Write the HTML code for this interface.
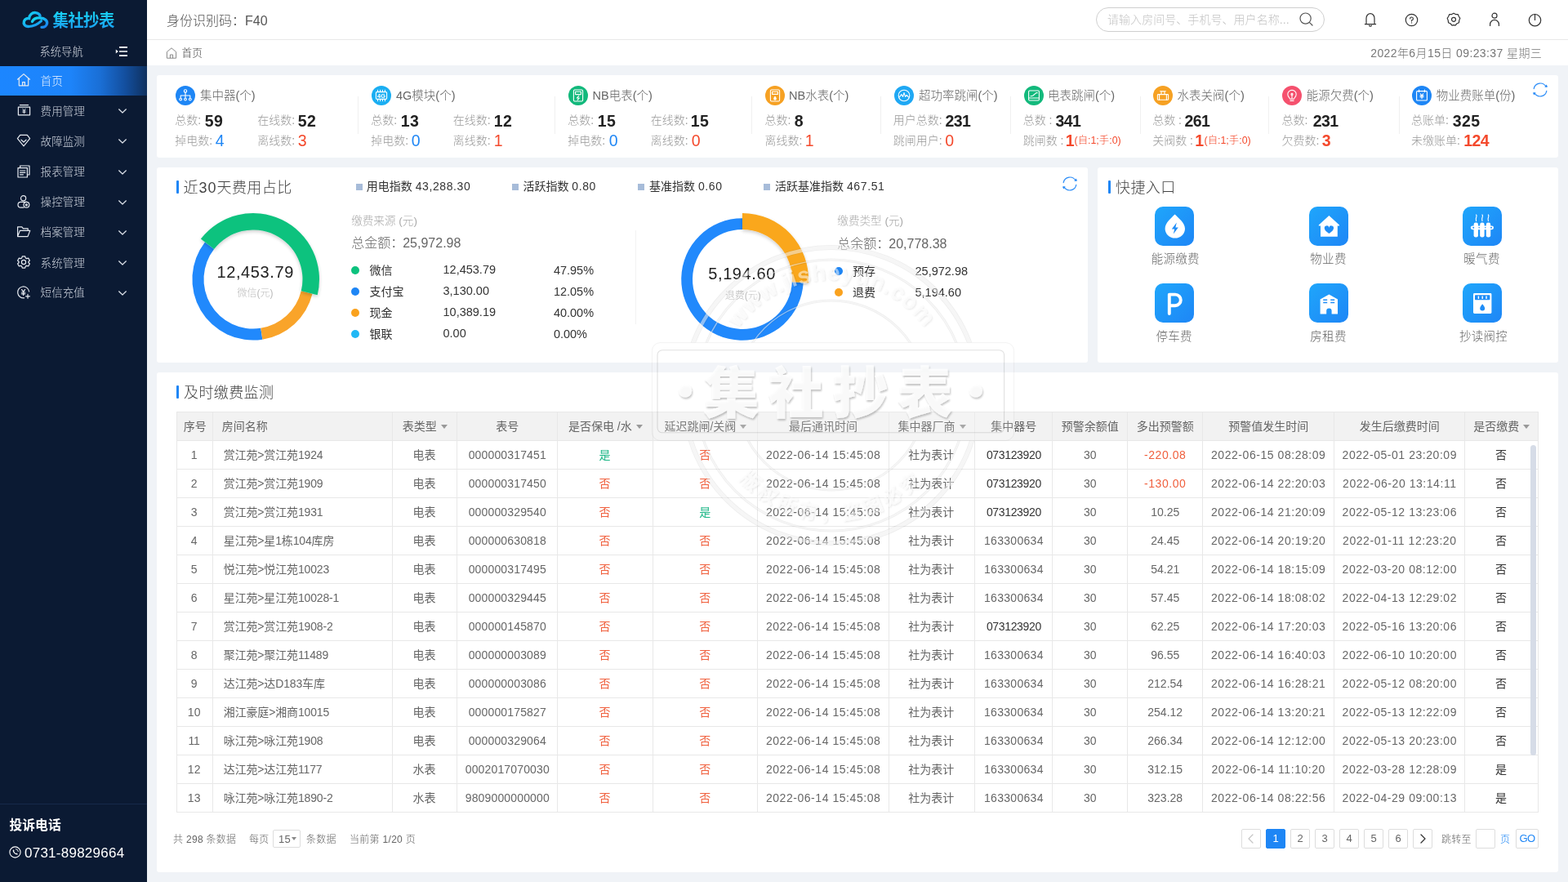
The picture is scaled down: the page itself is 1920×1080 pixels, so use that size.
<!DOCTYPE html>
<html lang="zh-CN"><head><meta charset="utf-8"><title>集社抄表</title>
<style>
*{box-sizing:border-box;margin:0;padding:0}
html,body{width:1920px;height:1080px;overflow:hidden}
body{font-family:"Liberation Sans","Noto Sans CJK SC",sans-serif;background:#f0f3f7;color:#333;position:relative;font-size:14px;font-weight:300}
body>*{will-change:transform}
.abs{position:absolute}
.t{position:absolute;white-space:nowrap;line-height:1}
#side{position:absolute;left:0;top:0;width:180px;height:1080px;background:#0b1a33}
#side .mi{position:absolute;left:0;width:180px;height:36px;color:#ccd2dc;font-size:13.6px}
#side .mi .lb{position:absolute;left:49.6px;top:.8px;line-height:36px;white-space:nowrap}
#side .mi svg.ic{position:absolute;left:20px;top:8.4px}
#side .mi svg.ch{position:absolute;left:143px;top:14px}
#side .mi.act{background:linear-gradient(90deg,#1c86ff 0%,#1d84fa 48%,#1a6fd6 68%,#134f9f 85%,#0f315f 100%);color:#e8f2ff}
#top{position:absolute;left:180px;top:0;width:1740px;height:49px;background:#fff;border-bottom:1px solid #e8e8e8}
#crumb{position:absolute;left:180px;top:49px;width:1740px;height:31px;background:#fff}
.card{position:absolute;background:#fff;border-radius:3px}
.ttl{position:absolute;font-size:18px;color:#444;white-space:nowrap;line-height:1;letter-spacing:.4px}
.bar{position:absolute;width:3px;height:16px;background:#1e86f5;border-radius:1px}
.st{position:absolute;top:0;height:101px}
.st .ico{position:absolute;left:0;top:13px;width:24px;height:24px;border-radius:12px}
.st .nm{position:absolute;left:30px;top:17px;font-size:15px;color:#666;white-space:nowrap;line-height:1}
.st .l{position:absolute;font-size:14px;color:#999;white-space:nowrap;line-height:1}
.st .n{position:absolute;font-size:19px;font-weight:bold;color:#222;white-space:nowrap;line-height:1}
.st .b{color:#1e86f5;font-weight:normal}
.st .r{color:#f4492c;font-weight:normal}
.st .rb{color:#f4492c}
.st .s{position:absolute;font-size:12px;color:#f4492c;white-space:nowrap;line-height:1}
.sep{position:absolute;width:1px;background:#f0f0f0}
table{border-collapse:collapse;table-layout:fixed;position:absolute;left:216px;top:504px;width:1668px;font-size:14px;color:#666;font-weight:300}
th,td{border:1px solid #e8e8e8;height:35px;text-align:center;font-weight:normal;white-space:nowrap;overflow:hidden;padding:0}
th{background:#f2f2f2;color:#666;height:35px}
td.l{text-align:left;padding-left:12.5px} th.l{text-align:left;padding-left:10.5px}
td.dt{letter-spacing:.55px} td.num{letter-spacing:.15px} td.dk.num{letter-spacing:-.35px} td.c8{letter-spacing:.3px} td.amt.red{letter-spacing:.55px} th,td.cj{padding-bottom:2px} td.l{padding-bottom:2px;letter-spacing:-.15px} td:first-child{padding-right:2px} td.cj{padding-right:1.5px}
td.red{color:#f0603e} td.grn{color:#1db787} td.dk{color:#333}
.tri{display:inline-block;width:0;height:0;border-left:4px solid transparent;border-right:4px solid transparent;border-top:5px solid #999;margin-left:5px;vertical-align:middle;position:relative;top:-1px}
.pg{position:absolute;top:1015px;width:24px;height:24px;border:1px solid #ddd;border-radius:2px;font-size:13px;line-height:22px;text-align:center;color:#666;background:#fff}
.pg.on{background:#1e86f5;border-color:#1e86f5;color:#fff}
.pt{position:absolute;font-size:12px;letter-spacing:.3px;margin-top:.6px;color:#666;white-space:nowrap;line-height:1}
.q{position:absolute;width:48px;height:48px;border-radius:10px;background:linear-gradient(135deg,#1fa6fb 0%,#1e86f6 100%)}
.ql{position:absolute;width:120px;text-align:center;font-size:14.5px;letter-spacing:.3px;color:#666;line-height:1;white-space:nowrap}
.lg{position:absolute;font-size:14px;font-weight:400;color:#333;white-space:nowrap;line-height:1}
.lgs{position:absolute;width:8px;height:8px;background:#a7bcd9}
.dot{position:absolute;width:10px;height:10px;border-radius:5px}
</style></head>
<body>
<div id="side">
<svg class="abs" style="left:26px;top:11px" width="36" height="28" viewBox="0 0 36 28">
<defs><linearGradient id="lg1" x1="0" y1="0" x2="1" y2="1"><stop offset="0" stop-color="#12e0f0"/><stop offset="1" stop-color="#1c7df0"/></linearGradient></defs>
<path d="M9 21.5 C4 21.5 2.5 18 3.5 15 C4.5 12 7.5 11.2 9.6 11.6 C10 7 13.5 4.2 17.6 4.6 C20.6 4.9 22.4 6.6 23 8.2" fill="none" stroke="url(#lg1)" stroke-width="3.4" stroke-linecap="round"/>
<path d="M13.5 15.4 C15 12.2 19 10.6 23.4 11 C28.6 11.4 32 14 31.6 17.6 C31.2 20.6 28.6 22.6 25 22.4" fill="none" stroke="url(#lg1)" stroke-width="3.4" stroke-linecap="round"/>
<path d="M9 21.5 C14 21.5 19 20 24.6 14.6" fill="none" stroke="url(#lg1)" stroke-width="3" stroke-linecap="round"/>
</svg>
<div class="t" style="left:64.5px;top:13.8px;font-size:19.5px;font-weight:bold;letter-spacing:-.7px;color:#1bb4f3;background:linear-gradient(180deg,#19d8f5,#1a9cf2);-webkit-background-clip:text;background-clip:text;-webkit-text-fill-color:transparent;line-height:22px;transform:scaleY(1.07);transform-origin:0 50%">集社抄表</div>
<div class="t" style="left:48.5px;top:57px;font-size:13.3px;color:#d3d8e0;line-height:14px">系统导航</div>
<svg class="abs" style="left:141px;top:56px" width="16" height="14" viewBox="0 0 16 14"><path d="M5 1.8 H15 M5 7 H15 M5 12.2 H15" stroke="#fff" stroke-width="1.7" fill="none"/><path d="M0.8 4.4 L3.8 7 L0.8 9.6 Z" fill="#fff"/></svg>
<div class="mi act" style="top:81px"><svg class="ic" width="18" height="18" viewBox="0 0 18 18"><path d="M1.5 8.2 L9 1.6 L16.5 8.2 M3.3 7 V15.8 H14.7 V7 M7.6 15.8 V11.6 H10.4 V15.8" fill="none" stroke="#e6eaf0" stroke-width="1.2" stroke-linejoin="round" stroke-linecap="round"/></svg><span class="lb">首页</span></div>
<div class="mi" style="top:118px"><svg class="ic" width="18" height="18" viewBox="0 0 18 18"><path d="M4.4 2.6 H14.6 M2.4 5.2 H16.6 V14.8 H2.4 Z" fill="none" stroke="#e6eaf0" stroke-width="1.2" stroke-linejoin="round" stroke-linecap="round"/><path d="M7.8 7.2 L9.5 9.4 L11.2 7.2 M9.5 9.4 V12.8 M7.8 9.8 H11.2 M7.8 11.3 H11.2" fill="none" stroke="#e6eaf0" stroke-width="0.9" stroke-linecap="round" stroke-linejoin="round"/></svg><span class="lb">费用管理</span><svg class="ch" width="12" height="8" style="left:143.5px;top:14px" viewBox="0 0 12 8"><path d="M1.6 1.8 L6 6 L10.4 1.8" fill="none" stroke="#dfe4ec" stroke-width="1.2" stroke-linecap="round" stroke-linejoin="round"/></svg></div>
<div class="mi" style="top:155px"><svg class="ic" width="18" height="18" viewBox="0 0 18 18"><path d="M4.6 2.4 H13.4 L16.6 6.6 L9 15.8 L1.4 6.6 Z M6 8.2 L9 11 L12 8.2" fill="none" stroke="#e6eaf0" stroke-width="1.2" stroke-linejoin="round" stroke-linecap="round"/></svg><span class="lb">故障监测</span><svg class="ch" width="12" height="8" style="left:143.5px;top:14px" viewBox="0 0 12 8"><path d="M1.6 1.8 L6 6 L10.4 1.8" fill="none" stroke="#dfe4ec" stroke-width="1.2" stroke-linecap="round" stroke-linejoin="round"/></svg></div>
<div class="mi" style="top:192.6px"><svg class="ic" width="18" height="18" viewBox="0 0 18 18"><path d="M4.6 4.6 V2 H16 V13 H13.4 M2 4.6 H13.4 V16 H2 Z M4.6 8 H10.8 M4.6 10.4 H10.8 M4.6 12.8 H8.4" fill="none" stroke="#e6eaf0" stroke-width="1.2" stroke-linejoin="round" stroke-linecap="round"/></svg><span class="lb">报表管理</span><svg class="ch" width="12" height="8" style="left:143.5px;top:14px" viewBox="0 0 12 8"><path d="M1.6 1.8 L6 6 L10.4 1.8" fill="none" stroke="#dfe4ec" stroke-width="1.2" stroke-linecap="round" stroke-linejoin="round"/></svg></div>
<div class="mi" style="top:229.7px"><svg class="ic" width="18" height="18" viewBox="0 0 18 18"><circle cx="8.6" cy="4.8" r="3.1" fill="none" stroke="#e6eaf0" stroke-width="1.2" stroke-linejoin="round" stroke-linecap="round"/><path d="M12.6 9.4 H5.4 A3.4 3.4 0 0 0 5.4 16.2 H9" fill="none" stroke="#e6eaf0" stroke-width="1.2" stroke-linejoin="round" stroke-linecap="round"/><circle cx="12.4" cy="12.8" r="3.4" fill="none" stroke="#e6eaf0" stroke-width="1.2" stroke-linejoin="round" stroke-linecap="round"/><circle cx="12.4" cy="12.8" r="1" fill="none" stroke="#e6eaf0" stroke-width="1.2" stroke-linejoin="round" stroke-linecap="round"/></svg><span class="lb">操控管理</span><svg class="ch" width="12" height="8" style="left:143.5px;top:14px" viewBox="0 0 12 8"><path d="M1.6 1.8 L6 6 L10.4 1.8" fill="none" stroke="#dfe4ec" stroke-width="1.2" stroke-linecap="round" stroke-linejoin="round"/></svg></div>
<div class="mi" style="top:266.6px"><svg class="ic" width="18" height="18" viewBox="0 0 18 18"><path d="M1.6 14.6 V2.8 H6.8 L8.4 4.8 H14.2 V7.4 M1.6 14.6 L4.4 7.4 H16.8 L14 14.6 Z" fill="none" stroke="#e6eaf0" stroke-width="1.2" stroke-linejoin="round" stroke-linecap="round"/></svg><span class="lb">档案管理</span><svg class="ch" width="12" height="8" style="left:143.5px;top:14px" viewBox="0 0 12 8"><path d="M1.6 1.8 L6 6 L10.4 1.8" fill="none" stroke="#dfe4ec" stroke-width="1.2" stroke-linecap="round" stroke-linejoin="round"/></svg></div>
<div class="mi" style="top:303.8px"><svg class="ic" width="18" height="18" viewBox="0 0 18 18"><path d="M7.3 1.8 H10.7 L11.3 3.9 L12.6 4.6 L14.7 4.1 L16.4 7 L14.9 8.5 V9.5 L16.4 11 L14.7 13.9 L12.6 13.4 L11.3 14.1 L10.7 16.2 H7.3 L6.7 14.1 L5.4 13.4 L3.3 13.9 L1.6 11 L3.1 9.5 V8.5 L1.6 7 L3.3 4.1 L5.4 4.6 L6.7 3.9 Z" fill="none" stroke="#e6eaf0" stroke-width="1.2" stroke-linejoin="round" stroke-linecap="round"/><circle cx="9" cy="9" r="2.6" fill="none" stroke="#e6eaf0" stroke-width="1.2" stroke-linejoin="round" stroke-linecap="round"/></svg><span class="lb">系统管理</span><svg class="ch" width="12" height="8" style="left:143.5px;top:14px" viewBox="0 0 12 8"><path d="M1.6 1.8 L6 6 L10.4 1.8" fill="none" stroke="#dfe4ec" stroke-width="1.2" stroke-linecap="round" stroke-linejoin="round"/></svg></div>
<div class="mi" style="top:340.6px"><svg class="ic" width="18" height="18" viewBox="0 0 18 18"><path d="M15.6 8 A7 7 0 1 0 9.6 15.9 M6.6 5.6 L8.6 8.2 L10.6 5.6 M8.6 8.2 V12.4 M6.4 9 H10.8 M6.4 10.8 H10.8 M14 11.4 V16.2 M11.6 13.8 H16.4" fill="none" stroke="#e6eaf0" stroke-width="1.2" stroke-linejoin="round" stroke-linecap="round"/></svg><span class="lb">短信充值</span><svg class="ch" width="12" height="8" style="left:143.5px;top:14px" viewBox="0 0 12 8"><path d="M1.6 1.8 L6 6 L10.4 1.8" fill="none" stroke="#dfe4ec" stroke-width="1.2" stroke-linecap="round" stroke-linejoin="round"/></svg></div>
<div class="abs" style="left:0;top:984px;width:180px;height:1px;background:#16294a"></div>
<div class="t" style="left:11.5px;top:1003px;font-size:15.8px;font-weight:bold;color:#fff;line-height:16px">投诉电话</div>
<svg class="abs" style="left:11px;top:1036px" width="15" height="15" viewBox="0 0 15 15"><circle cx="7.5" cy="7.5" r="6.6" fill="none" stroke="#fff" stroke-width="1.1"/><path d="M5 4.2 C4.4 5.6 5 7.4 6.4 8.8 C7.8 10.2 9.4 10.8 10.8 10.2 L9.8 8.6 L8.6 9 C7.8 8.6 6.6 7.4 6.2 6.4 L6.6 5.4 Z" fill="#fff"/><path d="M8 3.6 A3.6 3.6 0 0 1 11.4 7" fill="none" stroke="#fff" stroke-width="0.9"/></svg>
<div class="t" style="left:30px;top:1035.5px;font-size:17px;color:#fff;line-height:17px;letter-spacing:.25px">0731-89829664</div>
</div>
<div id="top">
<div class="t" style="left:24px;top:17.5px;font-size:16px;color:#555;line-height:16px">身份识别码：F40</div>
<div class="abs" style="left:1162px;top:9px;width:280px;height:30px;border:1px solid #cfcfcf;border-radius:15px;background:#fff"></div>
<div class="t" style="left:1176px;top:17px;font-size:14px;color:#c4c4c4;line-height:14px;letter-spacing:.05px">请输入房间号、手机号、用户名称...</div>
<svg class="abs" style="left:1410px;top:14px" width="20" height="20" viewBox="0 0 20 20"><circle cx="8.6" cy="8.6" r="6.6" fill="none" stroke="#555" stroke-width="1.2"/><path d="M13.6 13.6 L17 17" stroke="#555" stroke-width="1.2" fill="none" stroke-linecap="round"/></svg>
<svg class="abs" style="left:1489px;top:14px" width="18" height="20" viewBox="0 0 18 20"><path d="M2.4 15.6 H15.6 M4 15.6 V8.2 A5 5.6 0 0 1 14 8.2 V15.6 M7.6 17.2 A1.5 1.5 0 0 0 10.4 17.2" fill="none" stroke="#333" stroke-width="1.2" stroke-linecap="round" stroke-linejoin="round"/></svg>
<svg class="abs" style="left:1539px;top:15px" width="19" height="19" viewBox="0 0 19 19"><circle cx="9.5" cy="9.5" r="7.2" fill="none" stroke="#333" stroke-width="1.2" stroke-linecap="round" stroke-linejoin="round"/><path d="M7.6 7.8 A1.9 1.9 0 1 1 9.5 9.8 V11" fill="none" stroke="#333" stroke-width="1.2" stroke-linecap="round" stroke-linejoin="round" stroke-width="1.1"/><circle cx="9.5" cy="12.9" r="0.7" fill="#333"/></svg>
<svg class="abs" style="left:1590px;top:14px" width="20" height="20" viewBox="0 0 20 20"><path d="M10 2.2 L12.4 3.6 L15.2 3.6 L16.4 6.2 L17.8 8.4 L16.8 10.9 L16.4 13.8 L13.8 15 L12 17.2 L10 16.6 L8 17.2 L6.2 15 L3.6 13.8 L3.2 10.9 L2.2 8.4 L3.6 6.2 L4.8 3.6 L7.6 3.6 Z" fill="none" stroke="#333" stroke-width="1.2" stroke-linecap="round" stroke-linejoin="round"/><circle cx="10" cy="9.8" r="2.5" fill="none" stroke="#333" stroke-width="1.2" stroke-linecap="round" stroke-linejoin="round"/></svg>
<svg class="abs" style="left:1641px;top:14px" width="18" height="20" viewBox="0 0 18 20"><circle cx="9" cy="5.2" r="3" fill="none" stroke="#333" stroke-width="1.2" stroke-linecap="round" stroke-linejoin="round"/><path d="M3.6 17.4 V16 A5.4 5.6 0 0 1 14.4 16 V17.4" fill="none" stroke="#333" stroke-width="1.2" stroke-linecap="round" stroke-linejoin="round"/></svg>
<svg class="abs" style="left:1690px;top:15px" width="19" height="19" viewBox="0 0 19 19"><circle cx="9.5" cy="9.7" r="7.2" fill="none" stroke="#333" stroke-width="1.2" stroke-linecap="round" stroke-linejoin="round"/><path d="M9.5 2.4 V9.4" fill="none" stroke="#333" stroke-width="1.2" stroke-linecap="round" stroke-linejoin="round"/></svg>
</div>
<div id="crumb">
<svg class="abs" style="left:22px;top:8px" width="16" height="16" viewBox="0 0 16 16"><path d="M2.4 6.6 L8 1.8 L13.6 6.6 V14.2 H2.4 Z M6.4 14.2 V10 H9.6 V14.2" fill="none" stroke="#888" stroke-width="1" stroke-linejoin="round"/></svg>
<div class="t" style="left:42.6px;top:10.4px;font-size:12.6px;color:#444;line-height:13px">首页</div>
<div class="t" style="right:31.8px;top:9px;font-size:14px;color:#777;line-height:14px;letter-spacing:.4px">2022年6月15日 09:23:37 星期三</div>
</div>
<div class="card" id="stats" style="left:192px;top:92px;width:1716px;height:101px">
<svg class="abs" style="left:23px;top:13px" width="24" height="24" viewBox="0 0 24 24"><circle cx="12" cy="12" r="12" fill="#1e86f5"/><circle cx="12" cy="6.4" r="1.7" fill="none" stroke="#fff" stroke-width="1.1" stroke-linecap="round" stroke-linejoin="round"/><path d="M12 8.2 V12 M6.2 15 V12 H17.8 V15 M12 12 V15" fill="none" stroke="#fff" stroke-width="1.1" stroke-linecap="round" stroke-linejoin="round"/><circle cx="6.2" cy="16.6" r="1.4" fill="none" stroke="#fff" stroke-width="1.1" stroke-linecap="round" stroke-linejoin="round"/><circle cx="12" cy="16.6" r="1.4" fill="none" stroke="#fff" stroke-width="1.1" stroke-linecap="round" stroke-linejoin="round"/><circle cx="17.8" cy="16.6" r="1.4" fill="none" stroke="#fff" stroke-width="1.1" stroke-linecap="round" stroke-linejoin="round"/></svg>
<div class="t" style="left:53px;top:16.5px;font-size:14.5px;color:#666;line-height:16px">集中器(个)</div>
<div class="t" style="left:22.2px;top:47.4px;font-size:14px;color:#999;line-height:16px">总数:</div>
<div class="t" style="left:59.0px;top:45.8px;font-size:19.5px;font-weight:bold;color:#222;line-height:20px;letter-spacing:.4px;margin-left:-.3px;">59</div>
<div class="t" style="left:123.2px;top:47.4px;font-size:14px;color:#999;line-height:16px">在线数:</div>
<div class="t" style="left:173.0px;top:45.8px;font-size:19.5px;font-weight:bold;color:#222;line-height:20px;letter-spacing:.4px;margin-left:-.3px;">52</div>
<div class="t" style="left:22.2px;top:71.8px;font-size:14px;color:#999;line-height:16px">掉电数:</div>
<div class="t" style="left:72.0px;top:69.7px;font-size:19.5px;font-weight:normal;color:#1e86f5;line-height:20px;letter-spacing:.4px;margin-left:-.3px;">4</div>
<div class="t" style="left:123.2px;top:71.8px;font-size:14px;color:#999;line-height:16px">离线数:</div>
<div class="t" style="left:173.0px;top:69.7px;font-size:19.5px;font-weight:normal;color:#f4492c;line-height:20px;letter-spacing:.4px;margin-left:-.3px;">3</div>
<svg class="abs" style="left:262.5px;top:13px" width="24" height="24" viewBox="0 0 24 24"><circle cx="12" cy="12" r="12" fill="#1aaef2"/><rect x="5.4" y="7.6" width="13.2" height="8.8" rx="1.2" fill="none" stroke="#fff" stroke-width="1.1" stroke-linecap="round" stroke-linejoin="round"/><path d="M7.6 5.4 V7.4 M10.6 5.4 V7.4 M13.4 5.4 V7.4 M16.4 5.4 V7.4 M7.6 16.6 V18.6 M10.6 16.6 V18.6 M13.4 16.6 V18.6 M16.4 16.6 V18.6" fill="none" stroke="#fff" stroke-width="1.1" stroke-linecap="round" stroke-linejoin="round"/><text x="12" y="14.7" font-size="7.4" font-weight="bold" fill="#fff" text-anchor="middle" font-family="Liberation Sans,sans-serif">4G</text></svg>
<div class="t" style="left:293px;top:16.5px;font-size:14.5px;color:#666;line-height:16px">4G模块(个)</div>
<div class="t" style="left:262.2px;top:47.4px;font-size:14px;color:#999;line-height:16px">总数:</div>
<div class="t" style="left:299.0px;top:45.8px;font-size:19.5px;font-weight:bold;color:#222;line-height:20px;letter-spacing:.4px;margin-left:-.3px;">13</div>
<div class="t" style="left:362.8px;top:47.4px;font-size:14px;color:#999;line-height:16px">在线数:</div>
<div class="t" style="left:413.0px;top:45.8px;font-size:19.5px;font-weight:bold;color:#222;line-height:20px;letter-spacing:.4px;margin-left:-.3px;">12</div>
<div class="t" style="left:262.2px;top:71.8px;font-size:14px;color:#999;line-height:16px">掉电数:</div>
<div class="t" style="left:312.0px;top:69.7px;font-size:19.5px;font-weight:normal;color:#1e86f5;line-height:20px;letter-spacing:.4px;margin-left:-.3px;">0</div>
<div class="t" style="left:362.8px;top:71.8px;font-size:14px;color:#999;line-height:16px">离线数:</div>
<div class="t" style="left:413.0px;top:69.7px;font-size:19.5px;font-weight:normal;color:#f4492c;line-height:20px;letter-spacing:.4px;margin-left:-.3px;">1</div>
<svg class="abs" style="left:503.5px;top:13px" width="24" height="24" viewBox="0 0 24 24"><circle cx="12" cy="12" r="12" fill="#13b97c"/><rect x="6.4" y="5" width="11.2" height="14" rx="1.4" fill="none" stroke="#fff" stroke-width="1.1" stroke-linecap="round" stroke-linejoin="round"/><rect x="8.6" y="7.2" width="6.8" height="3.4" fill="none" stroke="#fff" stroke-width="1.1" stroke-linecap="round" stroke-linejoin="round"/><path d="M12.8 12.4 L10.4 15 H13.4 L11.2 17.4" fill="none" stroke="#fff" stroke-width="1.1" stroke-linecap="round" stroke-linejoin="round"/></svg>
<div class="t" style="left:533.5px;top:16.5px;font-size:14.5px;color:#666;line-height:16px">NB电表(个)</div>
<div class="t" style="left:503.2px;top:47.4px;font-size:14px;color:#999;line-height:16px">总数:</div>
<div class="t" style="left:540.0px;top:45.8px;font-size:19.5px;font-weight:bold;color:#222;line-height:20px;letter-spacing:.4px;margin-left:-.3px;">15</div>
<div class="t" style="left:604.7px;top:47.4px;font-size:14px;color:#999;line-height:16px">在线数:</div>
<div class="t" style="left:654.0px;top:45.8px;font-size:19.5px;font-weight:bold;color:#222;line-height:20px;letter-spacing:.4px;margin-left:-.3px;">15</div>
<div class="t" style="left:503.2px;top:71.8px;font-size:14px;color:#999;line-height:16px">掉电数:</div>
<div class="t" style="left:554.0px;top:69.7px;font-size:19.5px;font-weight:normal;color:#1e86f5;line-height:20px;letter-spacing:.4px;margin-left:-.3px;">0</div>
<div class="t" style="left:604.7px;top:71.8px;font-size:14px;color:#999;line-height:16px">离线数:</div>
<div class="t" style="left:655.0px;top:69.7px;font-size:19.5px;font-weight:normal;color:#f4492c;line-height:20px;letter-spacing:.4px;margin-left:-.3px;">0</div>
<svg class="abs" style="left:744.5px;top:13px" width="24" height="24" viewBox="0 0 24 24"><circle cx="12" cy="12" r="12" fill="#f6a123"/><rect x="6.4" y="5" width="11.2" height="14" rx="1.4" fill="none" stroke="#fff" stroke-width="1.1" stroke-linecap="round" stroke-linejoin="round"/><rect x="8.6" y="7.2" width="6.8" height="3.2" fill="none" stroke="#fff" stroke-width="1.1" stroke-linecap="round" stroke-linejoin="round"/><path d="M12 12.6 C13.4 14.4 13.8 15.2 13.8 15.9 A1.8 1.8 0 0 1 10.2 15.9 C10.2 15.2 10.6 14.4 12 12.6 Z" fill="#fff"/></svg>
<div class="t" style="left:774px;top:16.5px;font-size:14.5px;color:#666;line-height:16px">NB水表(个)</div>
<div class="t" style="left:744.5px;top:47.4px;font-size:14px;color:#999;line-height:16px">总数:</div>
<div class="t" style="left:781.0px;top:45.8px;font-size:19.5px;font-weight:bold;color:#222;line-height:20px;letter-spacing:.4px;margin-left:-.3px;">8</div>
<div class="t" style="left:744.5px;top:71.8px;font-size:14px;color:#999;line-height:16px">离线数:</div>
<div class="t" style="left:794.0px;top:69.7px;font-size:19.5px;font-weight:normal;color:#f4492c;line-height:20px;letter-spacing:.4px;margin-left:-.3px;">1</div>
<svg class="abs" style="left:903px;top:13px" width="24" height="24" viewBox="0 0 24 24"><circle cx="12" cy="12" r="12" fill="#1fa8f4"/><circle cx="12" cy="12" r="6.8" fill="none" stroke="#fff" stroke-width="1.1" stroke-linecap="round" stroke-linejoin="round"/><path d="M6.6 13.6 L8.8 10.6 L10.6 13.4 L12 8.6 L13.6 13.4 L15.2 11.4 L17.4 13.8" fill="none" stroke="#fff" stroke-width="1.1" stroke-linecap="round" stroke-linejoin="round"/></svg>
<div class="t" style="left:933px;top:16.5px;font-size:14.5px;color:#666;line-height:16px">超功率跳闸(个)</div>
<div class="t" style="left:901.7px;top:47.4px;font-size:14px;color:#999;line-height:16px">用户总数:</div>
<div class="t" style="left:965.5px;top:45.8px;font-size:19.5px;font-weight:bold;color:#222;line-height:20px;letter-spacing:-.6px;">231</div>
<div class="t" style="left:901.7px;top:71.8px;font-size:14px;color:#999;line-height:16px">跳闸用户:</div>
<div class="t" style="left:965.5px;top:69.7px;font-size:19.5px;font-weight:normal;color:#f4492c;line-height:20px;letter-spacing:.4px;margin-left:-.3px;">0</div>
<svg class="abs" style="left:1061.6px;top:13px" width="24" height="24" viewBox="0 0 24 24"><circle cx="12" cy="12" r="12" fill="#13b97c"/><rect x="5.6" y="6" width="12.8" height="12" rx="1.2" fill="none" stroke="#fff" stroke-width="1.1" stroke-linecap="round" stroke-linejoin="round"/><path d="M5.8 15 H18.2 M8 12.8 L10.6 12.2 L15 8.6 L16.4 8.8" fill="none" stroke="#fff" stroke-width="1.1" stroke-linecap="round" stroke-linejoin="round"/></svg>
<div class="t" style="left:1091px;top:16.5px;font-size:14.5px;color:#666;line-height:16px">电表跳闸(个)</div>
<div class="t" style="left:1060.7px;top:47.4px;font-size:14px;color:#999;line-height:16px">总数 :</div>
<div class="t" style="left:1100.5px;top:45.8px;font-size:19.5px;font-weight:bold;color:#222;line-height:20px;letter-spacing:-.6px;">341</div>
<div class="t" style="left:1060.7px;top:71.8px;font-size:14px;color:#999;line-height:16px">跳闸数 :</div>
<div class="t" style="left:1113.0px;top:69.7px;font-size:19.5px;font-weight:bold;color:#f4492c;line-height:20px;letter-spacing:.4px;margin-left:-.3px;">1</div>
<div class="t" style="left:1123.5px;top:74.3px;font-size:12.4px;color:#f4492c;line-height:13px">(自:1;手:0)</div>
<svg class="abs" style="left:1219.7px;top:13px" width="24" height="24" viewBox="0 0 24 24"><circle cx="12" cy="12" r="12" fill="#f6a123"/><rect x="5.4" y="10.6" width="13.2" height="6.6" rx="0.8" fill="none" stroke="#fff" stroke-width="1.1" stroke-linecap="round" stroke-linejoin="round"/><path d="M7.6 10.6 V17.2 M16.4 10.6 V17.2 M10 10.4 V7 H14 V10.4 M8.6 6.8 H15.4" fill="none" stroke="#fff" stroke-width="1.1" stroke-linecap="round" stroke-linejoin="round"/></svg>
<div class="t" style="left:1249.6px;top:16.5px;font-size:14.5px;color:#666;line-height:16px">水表关阀(个)</div>
<div class="t" style="left:1219.2px;top:47.4px;font-size:14px;color:#999;line-height:16px">总数 :</div>
<div class="t" style="left:1258.6px;top:45.8px;font-size:19.5px;font-weight:bold;color:#222;line-height:20px;letter-spacing:-.6px;">261</div>
<div class="t" style="left:1219.2px;top:71.8px;font-size:14px;color:#999;line-height:16px">关阀数 :</div>
<div class="t" style="left:1271.5px;top:69.7px;font-size:19.5px;font-weight:bold;color:#f4492c;line-height:20px;letter-spacing:.4px;margin-left:-.3px;">1</div>
<div class="t" style="left:1282.5px;top:74.3px;font-size:12.4px;color:#f4492c;line-height:13px">(自:1;手:0)</div>
<svg class="abs" style="left:1377.8px;top:13px" width="24" height="24" viewBox="0 0 24 24"><circle cx="12" cy="12" r="12" fill="#f5516e"/><path d="M9.6 16.2 C9.6 14.8 6.8 13.8 6.8 10.6 A5.2 5.2 0 0 1 17.2 10.6 C17.2 13.8 14.4 14.8 14.4 16.2 Z M10 18.4 H14 M12 16 V11.4" fill="none" stroke="#fff" stroke-width="1.1" stroke-linecap="round" stroke-linejoin="round"/><circle cx="12" cy="10.4" r="1" fill="none" stroke="#fff" stroke-width="1.1" stroke-linecap="round" stroke-linejoin="round"/></svg>
<div class="t" style="left:1407.7px;top:16.5px;font-size:14.5px;color:#666;line-height:16px">能源欠费(个)</div>
<div class="t" style="left:1377.4px;top:47.4px;font-size:14px;color:#999;line-height:16px">总数:</div>
<div class="t" style="left:1415.8px;top:45.8px;font-size:19.5px;font-weight:bold;color:#222;line-height:20px;letter-spacing:-.6px;">231</div>
<div class="t" style="left:1377.4px;top:71.8px;font-size:14px;color:#999;line-height:16px">欠费数:</div>
<div class="t" style="left:1427.0px;top:69.7px;font-size:19.5px;font-weight:bold;color:#f4492c;line-height:20px;letter-spacing:.4px;margin-left:-.3px;">3</div>
<svg class="abs" style="left:1536.8px;top:13px" width="24" height="24" viewBox="0 0 24 24"><circle cx="12" cy="12" r="12" fill="#1e86f5"/><rect x="5.6" y="6.6" width="12.8" height="11.4" rx="1" fill="none" stroke="#fff" stroke-width="1.1" stroke-linecap="round" stroke-linejoin="round"/><path d="M8.6 5 V7.6 M15.4 5 V7.6 M10.2 9.8 L12 11.8 L13.8 9.8 M12 11.8 V15.6 M10 12.4 H14 M10 14 H14" fill="none" stroke="#fff" stroke-width="1.1" stroke-linecap="round" stroke-linejoin="round"/></svg>
<div class="t" style="left:1566.7px;top:16.5px;font-size:14.5px;color:#666;line-height:16px">物业费账单(份)</div>
<div class="t" style="left:1535.9px;top:47.4px;font-size:14px;color:#999;line-height:16px">总账单:</div>
<div class="t" style="left:1587.0px;top:45.8px;font-size:19.5px;font-weight:bold;color:#222;line-height:20px;letter-spacing:.4px;margin-left:-.3px;">325</div>
<div class="t" style="left:1535.9px;top:71.8px;font-size:14px;color:#999;line-height:16px">未缴账单:</div>
<div class="t" style="left:1600.3px;top:69.7px;font-size:19.5px;font-weight:bold;color:#f4492c;line-height:20px;letter-spacing:-.6px;">124</div>
<div class="sep" style="left:245.8px;top:26px;height:46px"></div>
<div class="sep" style="left:486.8px;top:26px;height:46px"></div>
<div class="sep" style="left:727.7px;top:26px;height:46px"></div>
<div class="sep" style="left:886.3px;top:26px;height:46px"></div>
<div class="sep" style="left:1045.3px;top:26px;height:46px"></div>
<div class="sep" style="left:1203.5px;top:26px;height:46px"></div>
<div class="sep" style="left:1361.1px;top:26px;height:46px"></div>
<div class="sep" style="left:1520.5px;top:26px;height:46px"></div>
<svg class="abs" style="left:1683.4px;top:7px" width="22" height="22" viewBox="0 0 22 22"><path d="M3.2 9.6 A8 8 0 0 1 18.2 7.4 M18.8 12.4 A8 8 0 0 1 3.8 14.6" fill="none" stroke="#2b8cf7" stroke-width="1.2" stroke-linecap="round"/><path d="M16.2 7.4 H20.2 L18.6 4.4 Z M5.8 14.6 H1.8 L3.4 17.6 Z" fill="#2b8cf7"/></svg>
</div>
<div class="card" id="chart" style="left:192px;top:205px;width:1140px;height:239px">
<div class="bar" style="left:24px;top:16px"></div>
<div class="ttl" style="left:32.599999999999994px;top:14.800000000000011px;line-height:20px">近<span style="letter-spacing:1px;margin-left:.5px">30</span>天费用占比</div>
<div class="lgs" style="left:243.6px;top:20px"></div>
<div class="lg" style="left:256.8px;top:14.400000000000006px;line-height:18px;font-size:14px">用电指数 <span style="letter-spacing:.6px">43,288.30</span></div>
<div class="lgs" style="left:434.9px;top:20px"></div>
<div class="lg" style="left:448.4px;top:14.400000000000006px;line-height:18px;font-size:14px">活跃指数 <span style="letter-spacing:.6px">0.80</span></div>
<div class="lgs" style="left:589.2px;top:20px"></div>
<div class="lg" style="left:603.0px;top:14.400000000000006px;line-height:18px;font-size:14px">基准指数 <span style="letter-spacing:.6px">0.60</span></div>
<div class="lgs" style="left:743.3px;top:20px"></div>
<div class="lg" style="left:757.1px;top:14.400000000000006px;line-height:18px;font-size:14px">活跃基准指数 <span style="letter-spacing:.6px">467.51</span></div>
<svg class="abs" style="left:1106.6px;top:9px" width="22" height="22" viewBox="0 0 22 22"><path d="M3.2 9.6 A8 8 0 0 1 18.2 7.4 M18.8 12.4 A8 8 0 0 1 3.8 14.6" fill="none" stroke="#2b8cf7" stroke-width="1.2" stroke-linecap="round"/><path d="M16.2 7.4 H20.2 L18.6 4.4 Z M5.8 14.6 H1.8 L3.4 17.6 Z" fill="#2b8cf7"/></svg>
<svg class="abs" style="left:0;top:0" width="1140" height="239" viewBox="192 205 1140 239"><defs><filter id="ds" x="-20%" y="-20%" width="140%" height="140%"><feGaussianBlur in="SourceAlpha" stdDeviation="2.2"/><feOffset dx="0" dy="2"/><feComponentTransfer><feFuncA type="linear" slope="0.2"/></feComponentTransfer><feMerge><feMergeNode/><feMergeNode in="SourceGraphic"/></feMerge></filter></defs><path d="M321.41 415.72 A74.6 74.6 0 0 1 250.97 296.38 L262.13 305.00 A60.5 60.5 0 0 0 319.26 401.79 Z" fill="#2189fc" /><path d="M382.48 359.67 A74.6 74.6 0 0 1 321.41 415.72 L319.26 401.79 A60.5 60.5 0 0 0 368.78 356.33 Z" fill="#f9a42a" /><path d="M245.91 292.47 A81 81 0 0 1 388.70 361.18 L368.78 356.33 A60.5 60.5 0 0 0 262.13 305.00 Z" fill="#0dc27e" filter="url(#ds)"/><path d="M983.70 345.91 A74.8 74.8 0 1 1 909.00 267.20 L909.00 281.00 A61 61 0 1 0 969.92 345.19 Z" fill="#2189fc" /><path d="M909.00 261.00 A81 81 0 0 1 989.89 346.24 L969.92 345.19 A61 61 0 0 0 909.00 281.00 Z" fill="#faa71b" filter="url(#ds)"/></svg>
<div class="t" style="left:60.7px;width:120px;text-align:center;top:116.5px;font-size:20px;color:#222;line-height:22px;letter-spacing:.6px">12,453.79</div>
<div class="t" style="left:60.5px;width:120px;text-align:center;top:147.4px;font-size:12px;color:#bbb;line-height:14px">微信(元)</div>
<div class="t" style="left:656.6px;width:120px;text-align:center;top:118.9px;font-size:20px;color:#222;line-height:22px;letter-spacing:.6px">5,194.60</div>
<div class="t" style="left:657.7px;width:120px;text-align:center;top:149.5px;font-size:12px;color:#bbb;line-height:14px">退费(元)</div>
<div class="t" style="left:238.2px;top:57.6px;font-size:13.6px;color:#aaa;line-height:16px">缴费来源 (元)</div>
<div class="t" style="left:238.2px;top:83.1px;font-size:16px;color:#666;line-height:18px;margin-top:1px">总金额：<span style="letter-spacing:0px;margin-left:-1px">25,972.98</span></div>
<div class="dot" style="left:238px;top:120.7px;background:#0dc27e"></div>
<div class="t" style="left:260.6px;top:117.7px;font-size:14px;font-weight:400;color:#333;line-height:16px">微信</div>
<div class="t" style="left:350.5px;top:116.7px;font-size:14.5px;color:#333;line-height:16px">12,453.79</div>
<div class="t" style="left:485.9px;top:117.7px;font-size:14.5px;color:#333;line-height:16px">47.95%</div>
<div class="dot" style="left:238px;top:146.7px;background:#1e86f5"></div>
<div class="t" style="left:260.6px;top:143.7px;font-size:14px;font-weight:400;color:#333;line-height:16px">支付宝</div>
<div class="t" style="left:350.5px;top:142.7px;font-size:14.5px;color:#333;line-height:16px">3,130.00</div>
<div class="t" style="left:485.9px;top:143.7px;font-size:14.5px;color:#333;line-height:16px">12.05%</div>
<div class="dot" style="left:238px;top:172.6px;background:#faa21e"></div>
<div class="t" style="left:260.6px;top:169.6px;font-size:14px;font-weight:400;color:#333;line-height:16px">现金</div>
<div class="t" style="left:350.5px;top:168.6px;font-size:14.5px;color:#333;line-height:16px">10,389.19</div>
<div class="t" style="left:485.9px;top:169.6px;font-size:14.5px;color:#333;line-height:16px">40.00%</div>
<div class="dot" style="left:238px;top:198.9px;background:#21b8f5"></div>
<div class="t" style="left:260.6px;top:195.9px;font-size:14px;font-weight:400;color:#333;line-height:16px">银联</div>
<div class="t" style="left:350.5px;top:194.9px;font-size:14.5px;color:#333;line-height:16px">0.00</div>
<div class="t" style="left:485.9px;top:195.9px;font-size:14.5px;color:#333;line-height:16px">0.00%</div>
<div class="sep" style="left:586px;top:77px;height:115px;background:#f3f3f3"></div>
<div class="t" style="left:833.3px;top:57.6px;font-size:13.6px;color:#aaa;line-height:16px">缴费类型 (元)</div>
<div class="t" style="left:833.3px;top:84.0px;font-size:16px;color:#666;line-height:18px;margin-top:1px">总余额：<span style="letter-spacing:0px;margin-left:-1px">20,778.38</span></div>
<div class="dot" style="left:830.1px;top:121.9px;background:#1e86f5"></div>
<div class="t" style="left:852.0px;top:118.9px;font-size:14px;font-weight:400;color:#333;line-height:16px">预存</div>
<div class="t" style="left:928.5px;top:118.9px;font-size:14.5px;color:#333;line-height:16px">25,972.98</div>
<div class="dot" style="left:830.1px;top:147.9px;background:#faa21e"></div>
<div class="t" style="left:852.0px;top:144.9px;font-size:14px;font-weight:400;color:#333;line-height:16px">退费</div>
<div class="t" style="left:928.5px;top:144.9px;font-size:14.5px;color:#333;line-height:16px">5,194.60</div>
</div>
<div class="card" id="quick" style="left:1344px;top:205px;width:564px;height:239px">
<div class="bar" style="left:13px;top:16px"></div>
<div class="ttl" style="left:22px;top:14.800000000000011px;line-height:20px">快捷入口</div>
<div class="q" style="left:70px;top:48px"><svg width="48" height="48" viewBox="0 0 48 48" style="display:block"><path d="M24.6 9.6 C28.5 13.6 37 20 37 27 A12.2 11.6 0 0 1 12.6 27 C12.6 20 20.6 13.6 24.6 9.6 Z" fill="#fff"/><path d="M26.8 19.6 L20.8 27.6 H24.2 L22.8 33.6 L28.8 25.4 H25.4 Z" fill="#1f8df7"/></svg></div>
<div class="ql" style="left:35.3px;top:103.5px;line-height:16px">能源缴费</div>
<div class="q" style="left:259px;top:48px"><svg width="48" height="48" viewBox="0 0 48 48" style="display:block"><path d="M24.4 11 L37 22.4 V23.6 H34.8 V36.8 H14 V23.6 H11.8 V22.4 Z" fill="#fff"/><path d="M24.4 33 C21 30.6 18.8 28.8 18.8 26.6 A2.8 2.8 0 0 1 24.4 25.8 A2.8 2.8 0 0 1 30 26.6 C30 28.8 27.8 30.6 24.4 33 Z" fill="#1f8df7"/></svg></div>
<div class="ql" style="left:222.5px;top:103.5px;line-height:16px">物业费</div>
<div class="q" style="left:447px;top:48px"><svg width="48" height="48" viewBox="0 0 48 48" style="display:block"><g fill="#fff"><rect x="13.6" y="19.6" width="5.4" height="18" rx="2.4"/><rect x="21.2" y="19.6" width="5.4" height="18" rx="2.4"/><rect x="28.8" y="19.6" width="5.4" height="18" rx="2.4"/><rect x="9.8" y="23.4" width="28.2" height="4.8" rx="2.4"/></g><path d="M16.6 10 C18.6 12 14.8 14 16.6 17.6 M24 10 C26 12 22.2 14 24 17.6 M31.4 10 C33.4 12 29.6 14 31.4 17.6" fill="none" stroke="#fff" stroke-width="1.1" stroke-linecap="round"/><g fill="#1f8df7"><circle cx="13.2" cy="25.8" r="1"/><circle cx="20.2" cy="25.8" r="0.8"/><circle cx="27.8" cy="25.8" r="0.8"/><circle cx="35" cy="25.8" r="1"/></g></svg></div>
<div class="ql" style="left:410.5px;top:103.5px;line-height:16px">暖气费</div>
<div class="q" style="left:70px;top:142px"><svg width="48" height="48" viewBox="0 0 48 48" style="display:block"><path d="M17.8 37 V13.6 H25 A6.8 6.8 0 0 1 25 27.2 H17.8" fill="none" stroke="#fff" stroke-width="3.9" stroke-linecap="round" stroke-linejoin="round"/></svg></div>
<div class="ql" style="left:33.7px;top:198.5px;line-height:16px">停车费</div>
<div class="q" style="left:259px;top:142px"><svg width="48" height="48" viewBox="0 0 48 48" style="display:block"><path d="M24.4 13.4 L35 19.4 V37.6 H27.6 V33.6 A3.2 3.2 0 0 0 21.2 33.6 V37.6 H13.6 V19.4 Z" fill="#fff"/><path d="M17.2 20.2 H22.2 M26.2 20.2 H31.2 M17.2 23.6 H22.2 M26.2 23.6 H31.2" stroke="#1f8df7" stroke-width="1.5" fill="none"/></svg></div>
<div class="ql" style="left:222.5px;top:198.5px;line-height:16px">房租费</div>
<div class="q" style="left:447px;top:142px"><svg width="48" height="48" viewBox="0 0 48 48" style="display:block"><rect x="13" y="12" width="22.4" height="25" rx="1.4" fill="#fff"/><rect x="15" y="14.2" width="18.4" height="6" rx="0.8" fill="#1f8df7"/><path d="M19.4 15.4 V19 M24.2 15.4 V19 M29 15.4 V19" stroke="#fff" stroke-width="1.4" fill="none"/><path d="M24.2 25.2 C26.4 28 27.2 29.4 27.2 30.6 A3 3 0 0 1 21.2 30.6 C21.2 29.4 22 28 24.2 25.2 Z" fill="#1f8df7"/></svg></div>
<div class="ql" style="left:412.5px;top:198.5px;line-height:16px">抄读阀控</div>
</div>
<div class="card" id="tbl" style="left:192px;top:456px;width:1716px;height:612px"></div>
<div class="bar" style="left:216px;top:472px"></div>
<div class="ttl" style="left:224.6px;top:470.6px;line-height:20px">及时缴费监测</div>
<table style="left:216px;top:504px;width:1667.4px"><colgroup><col style="width:44.30px"><col style="width:220.00px"><col style="width:79.10px"><col style="width:122.80px"><col style="width:117.20px"><col style="width:128.10px"><col style="width:160.30px"><col style="width:105.60px"><col style="width:95.00px"><col style="width:91.90px"><col style="width:91.90px"><col style="width:161.20px"><col style="width:160.00px"><col style="width:90.00px"></colgroup><thead><tr><th>序号</th><th class="l">房间名称</th><th>表类型<i class=tri></i></th><th>表号</th><th>是否保电 /水<i class=tri></i></th><th>延迟跳闸/关阀<i class=tri></i></th><th>最后通讯时间</th><th>集中器厂商<i class=tri></i></th><th>集中器号</th><th>预警余额值</th><th>多出预警额</th><th>预警值发生时间</th><th>发生后缴费时间</th><th>是否缴费<i class=tri></i></th></tr></thead><tbody><tr><td>1</td><td class="l">赏江苑>赏江苑1924</td><td class="cj">电表</td><td class="num">000000317451</td><td class="grn cj">是</td><td class="red cj">否</td><td class="dt">2022-06-14 15:45:08</td><td class="cj">社为表计</td><td class="dk num">073123920</td><td>30</td><td class="red amt">-220.08</td><td class="dt">2022-06-15 08:28:09</td><td class="dt">2022-05-01 23:20:09</td><td class="dk cj">否</td></tr><tr><td>2</td><td class="l">赏江苑>赏江苑1909</td><td class="cj">电表</td><td class="num">000000317450</td><td class="red cj">否</td><td class="red cj">否</td><td class="dt">2022-06-14 15:45:08</td><td class="cj">社为表计</td><td class="dk num">073123920</td><td>30</td><td class="red amt">-130.00</td><td class="dt">2022-06-14 22:20:03</td><td class="dt">2022-06-20 13:14:11</td><td class="dk cj">否</td></tr><tr><td>3</td><td class="l">赏江苑>赏江苑1931</td><td class="cj">电表</td><td class="num">000000329540</td><td class="red cj">否</td><td class="grn cj">是</td><td class="dt">2022-06-14 15:45:08</td><td class="cj">社为表计</td><td class="dk num">073123920</td><td>30</td><td class="amt">10.25</td><td class="dt">2022-06-14 21:20:09</td><td class="dt">2022-05-12 13:23:06</td><td class="dk cj">否</td></tr><tr><td>4</td><td class="l">星江苑>星1栋104库房</td><td class="cj">电表</td><td class="num">000000630818</td><td class="red cj">否</td><td class="red cj">否</td><td class="dt">2022-06-14 15:45:08</td><td class="cj">社为表计</td><td class="c8">163300634</td><td>30</td><td class="amt">24.45</td><td class="dt">2022-06-14 20:19:20</td><td class="dt">2022-01-11 12:23:20</td><td class="dk cj">否</td></tr><tr><td>5</td><td class="l">悦江苑>悦江苑10023</td><td class="cj">电表</td><td class="num">000000317495</td><td class="red cj">否</td><td class="red cj">否</td><td class="dt">2022-06-14 15:45:08</td><td class="cj">社为表计</td><td class="c8">163300634</td><td>30</td><td class="amt">54.21</td><td class="dt">2022-06-14 18:15:09</td><td class="dt">2022-03-20 08:12:00</td><td class="dk cj">否</td></tr><tr><td>6</td><td class="l">星江苑>星江苑10028-1</td><td class="cj">电表</td><td class="num">000000329445</td><td class="red cj">否</td><td class="red cj">否</td><td class="dt">2022-06-14 15:45:08</td><td class="cj">社为表计</td><td class="c8">163300634</td><td>30</td><td class="amt">57.45</td><td class="dt">2022-06-14 18:08:02</td><td class="dt">2022-04-13 12:29:02</td><td class="dk cj">否</td></tr><tr><td>7</td><td class="l">赏江苑>赏江苑1908-2</td><td class="cj">电表</td><td class="num">000000145870</td><td class="red cj">否</td><td class="red cj">否</td><td class="dt">2022-06-14 15:45:08</td><td class="cj">社为表计</td><td class="dk num">073123920</td><td>30</td><td class="amt">62.25</td><td class="dt">2022-06-14 17:20:03</td><td class="dt">2022-05-16 13:20:06</td><td class="dk cj">否</td></tr><tr><td>8</td><td class="l">聚江苑>聚江苑11489</td><td class="cj">电表</td><td class="num">000000003089</td><td class="red cj">否</td><td class="red cj">否</td><td class="dt">2022-06-14 15:45:08</td><td class="cj">社为表计</td><td class="c8">163300634</td><td>30</td><td class="amt">96.55</td><td class="dt">2022-06-14 16:40:03</td><td class="dt">2022-06-10 10:20:00</td><td class="dk cj">否</td></tr><tr><td>9</td><td class="l">达江苑>达D183车库</td><td class="cj">电表</td><td class="num">000000003086</td><td class="red cj">否</td><td class="red cj">否</td><td class="dt">2022-06-14 15:45:08</td><td class="cj">社为表计</td><td class="c8">163300634</td><td>30</td><td class="amt">212.54</td><td class="dt">2022-06-14 16:28:21</td><td class="dt">2022-05-12 08:20:00</td><td class="dk cj">否</td></tr><tr><td>10</td><td class="l">湘江豪庭>湘商10015</td><td class="cj">电表</td><td class="num">000000175827</td><td class="red cj">否</td><td class="red cj">否</td><td class="dt">2022-06-14 15:45:08</td><td class="cj">社为表计</td><td class="c8">163300634</td><td>30</td><td class="amt">254.12</td><td class="dt">2022-06-14 13:20:21</td><td class="dt">2022-05-13 12:22:09</td><td class="dk cj">否</td></tr><tr><td>11</td><td class="l">咏江苑>咏江苑1908</td><td class="cj">电表</td><td class="num">000000329064</td><td class="red cj">否</td><td class="red cj">否</td><td class="dt">2022-06-14 15:45:08</td><td class="cj">社为表计</td><td class="c8">163300634</td><td>30</td><td class="amt">266.34</td><td class="dt">2022-06-14 12:12:00</td><td class="dt">2022-05-13 20:23:00</td><td class="dk cj">否</td></tr><tr><td>12</td><td class="l">达江苑>达江苑1177</td><td class="cj">水表</td><td class="num">0002017070030</td><td class="red cj">否</td><td class="red cj">否</td><td class="dt">2022-06-14 15:45:08</td><td class="cj">社为表计</td><td class="c8">163300634</td><td>30</td><td class="amt">312.15</td><td class="dt">2022-06-14 11:10:20</td><td class="dt">2022-03-28 12:28:09</td><td class="dk cj">是</td></tr><tr><td>13</td><td class="l">咏江苑>咏江苑1890-2</td><td class="cj">水表</td><td class="num">9809000000000</td><td class="red cj">否</td><td class="red cj">否</td><td class="dt">2022-06-14 15:45:08</td><td class="cj">社为表计</td><td class="c8">163300634</td><td>30</td><td class="amt">323.28</td><td class="dt">2022-06-14 08:22:56</td><td class="dt">2022-04-29 09:00:13</td><td class="dk cj">是</td></tr></tbody></table>
<div class="abs" style="left:1874px;top:545px;width:7px;height:380px;border-radius:3.5px;background:#d6dce7"></div>
<div class="pt" style="left:212.4px;top:1020px;line-height:14px;color:#666;">共 298 条数据</div>
<div class="pt" style="left:305.1px;top:1020px;line-height:14px;color:#666;">每页</div>
<div class="abs" style="left:334px;top:1016px;width:34px;height:22px;border:1px solid #ddd;border-radius:2px;background:#fff"></div>
<div class="pt" style="left:341.2px;top:1020px;line-height:14px;color:#666;font-size:13px">15</div>
<div class="abs" style="left:356.5px;top:1025px;width:0;height:0;border-left:3.6px solid transparent;border-right:3.6px solid transparent;border-top:4.6px solid #888"></div>
<div class="pt" style="left:375.2px;top:1020px;line-height:14px;color:#666;">条数据</div>
<div class="pt" style="left:427.5px;top:1020px;line-height:14px;color:#666;">当前第 1/20 页</div>
<div class="pg" style="left:1520px"><svg width="22" height="22" viewBox="0 0 22 22" style="display:block"><path d="M13 6 L8 11 L13 16" fill="none" stroke="#c4c4c4" stroke-width="1.2" stroke-linecap="round" stroke-linejoin="round"/></svg></div>
<div class="pg on" style="left:1550px">1</div>
<div class="pg" style="left:1580px">2</div>
<div class="pg" style="left:1610px">3</div>
<div class="pg" style="left:1640px">4</div>
<div class="pg" style="left:1670px">5</div>
<div class="pg" style="left:1700px">6</div>
<div class="pg" style="left:1730px"><svg width="22" height="22" viewBox="0 0 22 22" style="display:block"><path d="M9 6 L14 11 L9 16" fill="none" stroke="#333" stroke-width="1.3" stroke-linecap="round" stroke-linejoin="round"/></svg></div>
<div class="pt" style="left:1765px;top:1020px;line-height:14px;color:#666;">跳转至</div>
<div class="pg" style="left:1807px"></div>
<div class="pt" style="left:1837.3px;top:1020px;line-height:14px;color:#1e86f5;">页</div>
<div class="pg" style="left:1855.5px;width:28px;color:#1e86f5;font-size:13px;letter-spacing:-.5px">GO</div>
<svg class="abs" id="wm" style="left:780px;top:290px;pointer-events:none" width="480" height="400" viewBox="780 290 480 400"><defs>
<filter id="wsh" x="-10%" y="-10%" width="120%" height="120%"><feGaussianBlur in="SourceAlpha" stdDeviation="1.1"/><feOffset dx="0.8" dy="1.4"/><feComponentTransfer><feFuncA type="linear" slope="0.2"/></feComponentTransfer><feMerge><feMergeNode/><feMergeNode in="SourceGraphic"/></feMerge></filter>
<filter id="wsh2" x="-10%" y="-10%" width="120%" height="120%"><feGaussianBlur in="SourceAlpha" stdDeviation="1.3"/><feOffset dx="1" dy="1.6"/><feComponentTransfer><feFuncA type="linear" slope="0.3"/></feComponentTransfer><feMerge><feMergeNode/><feMergeNode in="SourceGraphic"/></feMerge></filter>
<clipPath id="wclip"><path d="M780 290 H1260 V690 H780 Z M798.5 419.6 V539.4 H1241.6 V419.6 Z" clip-rule="evenodd"/></clipPath>
<path id="arcT" d="M 877 484 A 141 141 0 0 1 1159 484"/>
<path id="arcB" d="M 865 484 A 153 153 0 0 0 1171 484"/>
</defs><g clip-path="url(#wclip)"><circle cx="1018" cy="484" r="181" fill="none" stroke="#000" stroke-opacity="0.07" stroke-width="6.1"/><circle cx="1018" cy="484" r="181" fill="none" stroke="#fff" stroke-opacity="0.5" stroke-width="4.5"/><circle cx="1018" cy="484" r="166" fill="none" stroke="#000" stroke-opacity="0.07" stroke-width="3.1"/><circle cx="1018" cy="484" r="166" fill="none" stroke="#fff" stroke-opacity="0.5" stroke-width="1.5"/><circle cx="1018" cy="484" r="116" fill="none" stroke="#000" stroke-opacity="0.07" stroke-width="3.1"/><circle cx="1018" cy="484" r="116" fill="none" stroke="#fff" stroke-opacity="0.5" stroke-width="1.5"/><g filter="url(#wsh)" fill="#fff" fill-opacity="0.5" font-family="Liberation Sans,Noto Sans CJK SC,sans-serif" font-weight="bold"><text font-size="28" letter-spacing="1"><textPath href="#arcT" startOffset="50%" text-anchor="middle">www.jisheyun.com</textPath></text><text font-size="24" letter-spacing="4.4"><textPath href="#arcB" startOffset="50%" text-anchor="middle">版权所有，盗图必究</textPath></text></g></g><rect x="798.4" y="419.6" width="443.2" height="119.8" rx="10" fill="#fff" fill-opacity="0.15"/><rect x="805" y="428.7" width="424.6" height="101.1" rx="6" fill="none" stroke="#000" stroke-opacity="0.12" stroke-width="1.1"/><rect x="798.4" y="419.6" width="443.2" height="119.8" rx="10" fill="none" stroke="#000" stroke-opacity="0.05" stroke-width="1"/><g filter="url(#wsh2)" fill="#fff" fill-opacity="0.8"><text x="861.5" y="505.5" font-size="68" font-weight="900" letter-spacing="11" font-family="Liberation Sans,Noto Sans CJK SC,sans-serif">集社抄表</text><circle cx="839.1" cy="478.5" r="8"/><circle cx="1194.9" cy="478.5" r="8"/></g></svg>
</body></html>
